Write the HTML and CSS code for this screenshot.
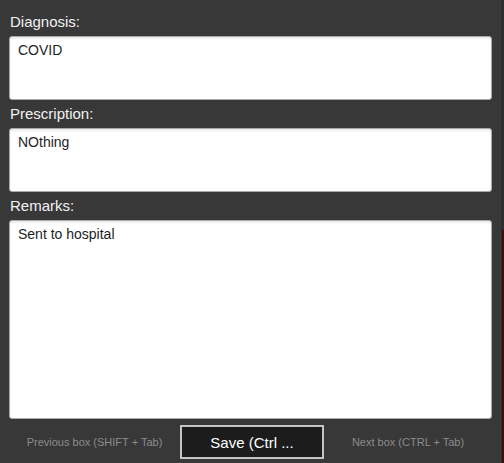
FILE: index.html
```html
<!DOCTYPE html>
<html>
<head>
<meta charset="utf-8">
<link rel="stylesheet" href="styles.css">
</head>
<body>
<div class="page">
  <main class="form">
    <label class="label label-first" for="diag">Diagnosis:</label>
    <textarea id="diag" class="box box-small" readonly>COVID</textarea>
    <label class="label" for="presc">Prescription:</label>
    <textarea id="presc" class="box box-small" readonly>NOthing</textarea>
    <label class="label" for="rem">Remarks:</label>
    <textarea id="rem" class="box box-large" readonly>Sent to hospital</textarea>
    <div class="footer">
      <span class="hint">Previous box (SHIFT + Tab)</span>
      <button class="save">Save (Ctrl ...</button>
      <span class="hint">Next box (CTRL + Tab)</span>
    </div>
  </main>
  <div class="edge">
    <div class="edge-top"></div>
    <div class="edge-red"></div>
  </div>
</div>
</body>
</html>
```
FILE: styles.css
```css
html, body {
  margin: 0;
  padding: 0;
  height: 100%;
  background: #383838;
}
.page {
  display: flex;
  height: 463px;
  width: 504px;
  font-family: "Liberation Sans", Arial, sans-serif;
}
.form {
  flex: 1;
  display: flex;
  flex-direction: column;
  padding: 0 9px;
}
.label {
  display: block;
  height: 28px;
  line-height: 28px;
  font-size: 15px;
  color: #f2f2f2;
  padding-left: 1px;
}
.label-first {
  margin-top: 8px;
}
.box {
  display: block;
  box-sizing: border-box;
  width: 100%;
  margin: 0;
  resize: none;
  border: 1px solid #a9a9a9;
  border-radius: 3px;
  background: #ffffff;
  box-shadow: inset 0 2px 2px rgba(0,0,0,0.08);
  font-family: "Liberation Sans", Arial, sans-serif;
  font-size: 14px;
  line-height: 16px;
  color: #1e1e1e;
  padding: 5px 8px;
  outline: none;
  overflow: hidden;
}
.box-small {
  height: 64px;
}
.box-large {
  height: 199px;
}
.footer {
  display: grid;
  grid-template-columns: 171px 144px 1fr;
  align-items: center;
  padding-top: 6px;
}
.hint {
  text-align: center;
  font-size: 11px;
  color: #8c8c8c;
}
.save {
  box-sizing: border-box;
  height: 34px;
  width: 144px;
  background: #1c1c1c;
  border: 2px solid #c4c4c4;
  color: #ffffff;
  font-family: "Liberation Sans", Arial, sans-serif;
  font-size: 15px;
  padding: 0;
}
.edge {
  width: 3px;
  display: flex;
  flex-direction: column;
  background: #2f2f2f;
}
.edge-top {
  height: 230px;
}
.edge-red {
  flex: 1;
  margin-left: 1px;
  background: #3f0b0b;
}
```
